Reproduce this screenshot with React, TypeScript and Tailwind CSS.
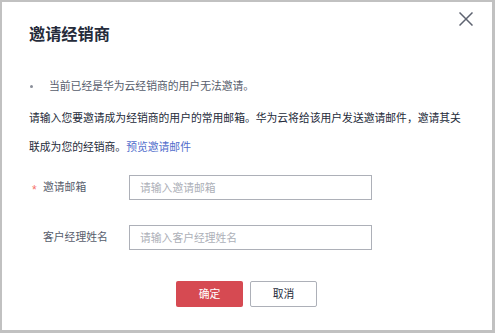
export default function App() {
  return (
    <div className="relative w-[495px] h-[333px] bg-white border-l-2 border-t-2 border-r-[3px] border-b-[3px] border-[#c1c1c1] font-['Liberation_Sans','Noto_Sans_CJK_SC',sans-serif] text-[10.8px] text-[#252b3a]">
      <button className="absolute top-[10px] right-[19px] w-[14px] h-[14px] text-[#5e6370]">
        <svg width="14" height="14" viewBox="0 0 14 14" fill="none" stroke="currentColor" strokeWidth="1.5">
          <path d="M0.5 0.5L13.5 13.5M13.5 0.5L0.5 13.5" />
        </svg>
      </button>

      <div className="px-[27px] pt-[20px]">
        <h1 className="text-[16.2px] leading-[24px] font-semibold">邀请经销商</h1>

        <ul className="mt-[30px] leading-[20px] text-[#575d6c]">
          <li className="flex items-center">
            <span className="w-[3px] h-[3px] rounded-full bg-[#8a8e99] ml-[1px] mr-[16px]" />
            当前已经是华为云经销商的用户无法邀请。
          </li>
        </ul>

        <p className="mt-[8px] leading-[29px]">
          请输入您要邀请成为经销商的用户的常用邮箱。华为云将给该用户发送邀请邮件，邀请其关联成为您的经销商。
          <a className="text-[#526ecc]">预览邀请邮件</a>
        </p>

        <div className="mt-[13px] flex flex-col gap-[25px]">
          <div className="flex items-center">
            <div className="w-[100px] flex items-center text-[#575d6c]">
              <span className="w-[14px] pl-[3px] text-[#f66f6a] text-[12px] leading-none translate-y-[2px]">*</span>
              <span>邀请邮箱</span>
            </div>
            <input
              className="w-[243px] h-[25px] border border-[#adb0b8] px-[10px] outline-none placeholder:text-[#adb0b8]"
              placeholder="请输入邀请邮箱"
            />
          </div>
          <div className="flex items-center">
            <div className="w-[100px] pl-[14px] text-[#575d6c]">客户经理姓名</div>
            <input
              className="w-[243px] h-[25px] border border-[#adb0b8] px-[10px] outline-none placeholder:text-[#adb0b8]"
              placeholder="请输入客户经理姓名"
            />
          </div>
        </div>

        <div className="mt-[31px] flex justify-center gap-[7px] pr-[1px]">
          <button className="w-[67px] h-[26px] bg-[#d64a52] text-white rounded-[2px]">确定</button>
          <button className="w-[67px] h-[26px] border border-[#adb0b8] text-[#252b3a] rounded-[2px]">取消</button>
        </div>
      </div>
    </div>
  )
}
